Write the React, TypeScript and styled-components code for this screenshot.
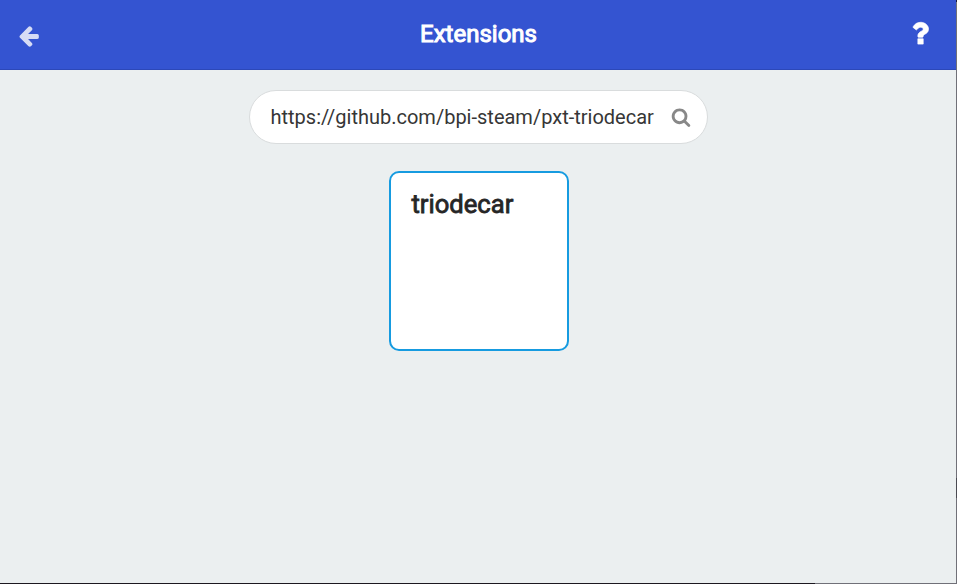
import React from "react";
import styled, { createGlobalStyle } from "styled-components";

const GlobalStyle = createGlobalStyle`
  * { box-sizing: border-box; }
  body { margin: 0; overflow: hidden; font-family: Roboto, "Liberation Sans", sans-serif; }
`;

const Frame = styled.div`
  display: grid;
  grid-template-columns: 1fr 1px;
  grid-template-rows: 1fr 1px;
  width: 957px;
  height: 584px;
`;

const Page = styled.main`
  display: flex;
  flex-direction: column;
  background: #ebeff0;
`;

const RightEdge = styled.div`
  background: linear-gradient(#15153a 2px, #707078 2px, #707078 478px, #4a4a52 478px, #4a4a52 498px, #707078 498px);
`;

const BottomEdge = styled.div`
  grid-column: 1 / -1;
  background: linear-gradient(to right, #1c1820 815px, #707078 815px);
`;

const Header = styled.header`
  display: grid;
  grid-template-columns: 1fr auto 1fr;
  align-items: center;
  height: 70px;
  padding: 0 20px 3px 17px;
  background: #3454d1;
  border-bottom: 1px solid #2c48b8;
  color: #fff;
`;

const HeaderButton = styled.button<{ $end?: boolean }>`
  display: flex;
  justify-self: ${(p) => (p.$end ? "end" : "start")};
  padding: ${(p) => (p.$end ? "0 1px 0 0" : "5px 0 0")};
  border: 0;
  background: none;
  color: #fff;
  opacity: ${(p) => (p.$end ? 1 : 0.8)};
`;

const Title = styled.h1`
  margin: 2px 0 0 4px;
  font-size: 24px;
  line-height: 30px;
  font-weight: 400;
  -webkit-text-stroke: 1px currentColor;
`;

const Content = styled.section`
  display: flex;
  flex-direction: column;
  align-items: center;
  padding: 20px 0 0 1px;
`;

const SearchBox = styled.label`
  display: flex;
  align-items: center;
  width: 459px;
  height: 54px;
  padding: 0 16px 0 20.5px;
  border: 1px solid #d9dcdd;
  border-radius: 27px;
  background: #fff;
  color: #888;
`;

const SearchInput = styled.input`
  flex: 1;
  min-width: 0;
  padding: 0;
  border: 0;
  outline: 0;
  background: transparent;
  color: #363636;
  font: 400 20px/26px Roboto, "Liberation Sans", sans-serif;
`;

const Card = styled.article`
  width: 180px;
  height: 180px;
  margin-top: 27px;
  padding: 15px 20px 15px 21px;
  border: 2px solid #169be0;
  border-radius: 10px;
  background: #fff;
`;

const CardTitle = styled.h2`
  margin: 0;
  color: #262626;
  font-size: 25.6px;
  line-height: 32px;
  font-weight: 400;
  -webkit-text-stroke: 0.8px currentColor;
`;

const Glyph = styled.svg<{ $size: number; $weight: number }>`
  display: block;
  flex: none;
  width: ${(p) => p.$size}px;
  height: ${(p) => p.$size}px;
  fill: currentColor;
  stroke: currentColor;
  stroke-width: ${(p) => p.$weight};
`;

const icons = {
  back: "M1664 896v128q0 53-32.5 90.500t-84.500 37.500h-704l293 294q38 36 38 90t-38 90l-75 76q-37 37-90 37-52 0-91-37l-651-652q-37-37-37-90 0-52 37-91l651-650q38-38 91-38 52 0 90 38l75 74q38 38 38 91t-38 91l-293 293h704q52 0 84.500 37.500t32.500 90.500z",
  help: "M1088 1240v320h-320v-320zm316-584q0 54-15.500 101t-35 76.500-55 59.500-57.500 43.500-61 35.500q-41 23-68.500 65t-27.500 67q0 17-12 32.500t-28 15.500h-240q-15 0-25.500-18.500t-10.500-37.500v-45q0-83 65-156.500t143-108.500q59-27 84-56t25-76q0-42-46.500-74t-107.500-32q-65 0-108 29-35 25-107 115-13 16-31 16-12 0-25-8l-164-125q-13-10-15.500-25t5.500-28q160-266 464-266 80 0 161 31t146 83 106 127.500 41 158.500z",
  search: "M1216 832q0-185-131.500-316.500t-316.500-131.500-316.500 131.500-131.500 316.500 131.500 316.500 316.500 131.500 316.500-131.500 131.500-316.500zm512 832q0 52-38 90t-90 38q-54 0-90-38l-343-342q-179 124-399 124-143 0-273.500-55.500t-225-150-150-225-55.500-273.500 55.500-273.500 150-225 225-150 273.500-55.500 273.500 55.500 225 150 150 225 55.500 273.500q0 220-124 399l343 343q37 37 37 90z",
};

function Icon({ name, size, weight = 0 }: { name: keyof typeof icons; size: number; weight?: number }) {
  return (
    <Glyph $size={size} $weight={weight} viewBox="0 0 1792 1792" aria-hidden="true">
      <path d={icons[name]} />
    </Glyph>
  );
}

export default function App() {
  return (
    <>
      <GlobalStyle />
      <Frame>
        <Page>
          <Header>
            <HeaderButton aria-label="Go back"><Icon name="back" size={23.5} /></HeaderButton>
            <Title>Extensions</Title>
            <HeaderButton $end aria-label="Help"><Icon name="help" size={30} weight={40} /></HeaderButton>
          </Header>
          <Content>
            <SearchBox>
              <SearchInput aria-label="Search" defaultValue="https://github.com/bpi-steam/pxt-triodecar" />
              <Icon name="search" size={20} />
            </SearchBox>
            <Card>
              <CardTitle>triodecar</CardTitle>
            </Card>
          </Content>
        </Page>
        <RightEdge />
        <BottomEdge />
      </Frame>
    </>
  );
}
